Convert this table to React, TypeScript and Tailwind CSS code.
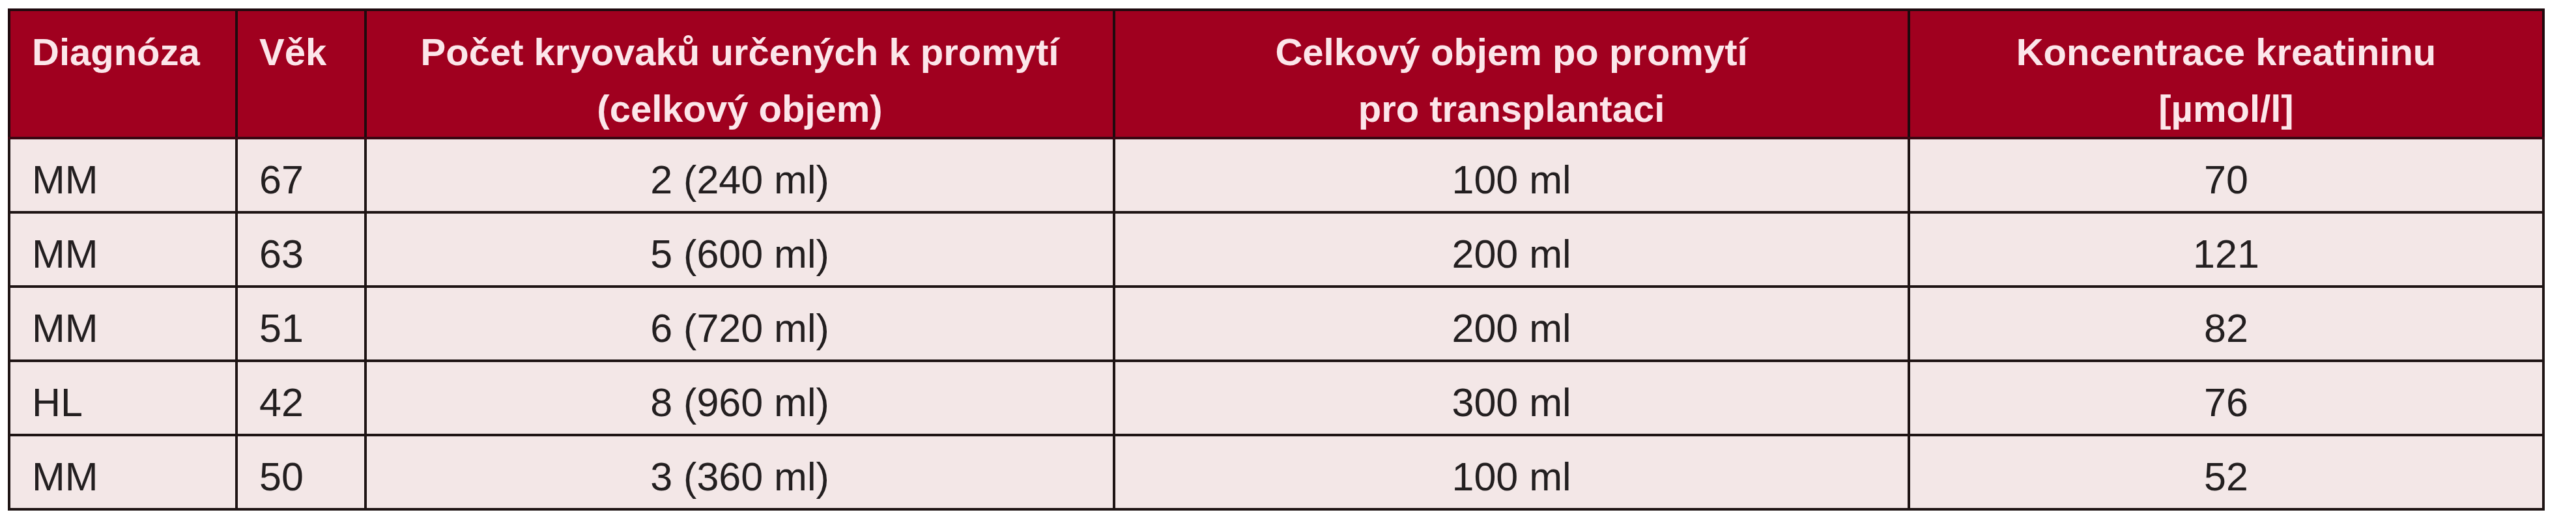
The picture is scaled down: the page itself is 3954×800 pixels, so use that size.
import React from "react";

const rows = [
  ["MM", "67", "2 (240 ml)", "100 ml", "70"],
  ["MM", "63", "5 (600 ml)", "200 ml", "121"],
  ["MM", "51", "6 (720 ml)", "200 ml", "82"],
  ["HL", "42", "8 (960 ml)", "300 ml", "76"],
  ["MM", "50", "3 (360 ml)", "100 ml", "52"],
];

export default function App() {
  return (
    <div className="w-[3954px] h-[800px] bg-white pt-[13px] pl-[12px]" style={{ fontFamily: "'Liberation Sans', Arial, sans-serif" }}>
      <table className="w-[3890px] table-fixed border-collapse">
        <colgroup>
          <col className="w-[349px]" />
          <col className="w-[198px]" />
          <col className="w-[1149px]" />
          <col className="w-[1220px]" />
          <col className="w-[974px]" />
        </colgroup>
        <thead>
          <tr className="h-[197px] bg-[#a0001f] text-[#fce6ea]">
            <th className="border-[4px] border-[#1e0a0e] border-b-[#3a0612] align-top text-left pl-[33px] pt-[19px] text-[58px] leading-[87px] font-bold">Diagnóza</th>
            <th className="border-[4px] border-[#1e0a0e] border-b-[#3a0612] align-top text-left pl-[33px] pt-[19px] text-[58px] leading-[87px] font-bold">Věk</th>
            <th className="border-[4px] border-[#1e0a0e] border-b-[#3a0612] align-top text-center pt-[19px] text-[58px] leading-[87px] font-bold">
              Počet kryovaků určených k promytí
              <br />
              (celkový objem)
            </th>
            <th className="border-[4px] border-[#1e0a0e] border-b-[#3a0612] align-top text-center pt-[19px] text-[58px] leading-[87px] font-bold">
              Celkový objem po promytí
              <br />
              pro transplantaci
            </th>
            <th className="border-[4px] border-[#1e0a0e] border-b-[#3a0612] align-top text-center pt-[19px] text-[58px] leading-[87px] font-bold">
              Koncentrace kreatininu
              <br />
              [µmol/l]
            </th>
          </tr>
        </thead>
        <tbody>
          {rows.map((r, i) => (
            <tr key={i} className="h-[114px] bg-[#f3e7e7] text-[#231f20]">
              <td className="border-[4px] border-[#1e1414] align-middle text-left pl-[33px] pt-[15px] text-[61px] leading-[1.15]">{r[0]}</td>
              <td className="border-[4px] border-[#1e1414] align-middle text-left pl-[33px] pt-[15px] text-[61px] leading-[1.15]">{r[1]}</td>
              <td className="border-[4px] border-[#1e1414] align-middle text-center pt-[15px] text-[61px] leading-[1.15]">{r[2]}</td>
              <td className="border-[4px] border-[#1e1414] align-middle text-center pt-[15px] text-[61px] leading-[1.15]">{r[3]}</td>
              <td className="border-[4px] border-[#1e1414] align-middle text-center pt-[15px] text-[61px] leading-[1.15]">{r[4]}</td>
            </tr>
          ))}
        </tbody>
      </table>
    </div>
  );
}
